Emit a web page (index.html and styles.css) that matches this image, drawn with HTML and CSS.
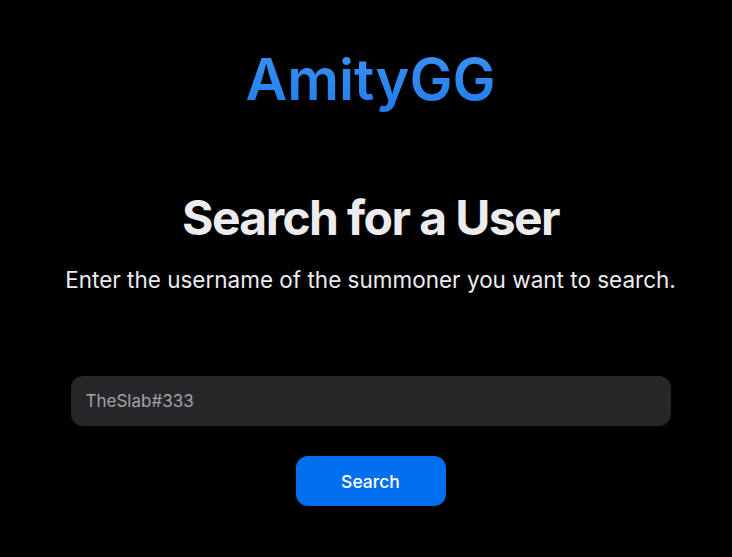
FILE: index.html
```html
<!DOCTYPE html>
<html lang="en">
<head>
  <meta charset="UTF-8" />
  <meta name="viewport" content="width=device-width, initial-scale=1.0"/>
  <title>AmityGG</title>
  <link rel="stylesheet" href="styles.css">
</head>
<body>

<div class="page">
  <h1 class="brand">AmityGG</h1>
  <h2 class="title">Search for a User</h2>
  <p class="subtitle">Enter the username of the summoner you want to search.</p>
  <input class="search-input" type="text" placeholder="TheSlab#333" />
  <button class="search-btn">Search</button>
</div>

</body>
</html>
```

FILE: styles.css
```css
body {
  margin: 0;
  background: #000;
  font-family: Inter, "Noto Sans", sans-serif;
  color: #ececee;
}
.page {
  display: flex;
  flex-direction: column;
  align-items: center;
  padding: 45px 0 0 9px;
}
.brand {
  margin: 0;
  font-size: 57.5px;
  font-weight: 600;
  line-height: 1.2;
  background: linear-gradient(180deg, #3c93f4, #217ce9);
  -webkit-background-clip: text;
  background-clip: text;
  color: transparent;
}
.title {
  margin: 75px 0 0;
  font-size: 48px;
  font-weight: 700;
  line-height: 1.2;
  letter-spacing: -1.6px;
  color: #ececee;
}
.subtitle {
  margin: 17px 0 0;
  font-size: 22.5px;
  line-height: 1.4;
}
.search-input {
  box-sizing: border-box;
  margin-top: 81px;
  width: 600px;
  height: 50px;
  padding: 0 15px;
  border: none;
  border-radius: 12px;
  background: #27272a;
  color: #ececee;
  font-family: inherit;
  font-size: 17px;
  outline: none;
}
.search-input::placeholder {
  color: #a1a1aa;
}
.search-btn {
  margin-top: 30px;
  width: 150px;
  height: 50px;
  border: none;
  border-radius: 12px;
  background: #006fee;
  color: #fff;
  font-family: inherit;
  font-size: 17.5px;
  font-weight: 500;
}
```
